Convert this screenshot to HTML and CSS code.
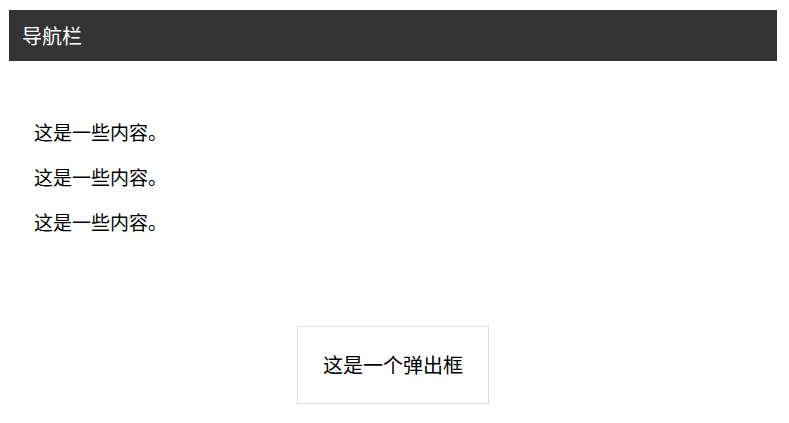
FILE: index.html
```html
<!DOCTYPE html>
<html lang="zh-CN">
<head>
<meta charset="utf-8">
<title>导航栏</title>
<link rel="stylesheet" href="styles.css">
</head>
<body>
<nav class="navbar">导航栏</nav>
<main class="content">
  <p class="line">这是一些内容。</p>
  <p class="line">这是一些内容。</p>
  <p class="line">这是一些内容。</p>
</main>
<div class="popup-wrap">
  <div class="popup">这是一个弹出框</div>
</div>
</body>
</html>
```
FILE: styles.css
```css
html, body {
  background: #ffffff;
}
body {
  margin: 10px 12px 0 9px;
  font-family: "Noto Sans CJK SC", "Noto Sans", "Liberation Sans", sans-serif;
  color: #000;
}
.navbar {
  height: 51px;
  line-height: 51px;
  background: #333333;
  color: #ffffff;
  font-size: 20px;
  padding-left: 13px;
}
.content {
  padding: 40px 25px 0;
}
.line {
  font-size: 19px;
  line-height: 28px;
  margin: 17px 0;
}
.popup-wrap {
  display: flex;
  justify-content: center;
  margin-top: 90px;
}
.popup {
  border: 1px solid #dddddd;
  padding: 24px 25px;
  font-size: 20px;
  line-height: 28px;
  background: #fff;
}
```
